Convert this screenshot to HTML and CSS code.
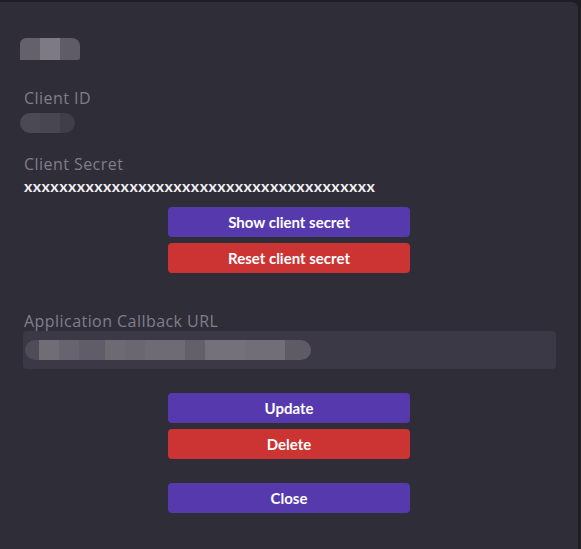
FILE: index.html
```html
<!DOCTYPE html>
<html>
<head>
<meta charset="utf-8">
<link rel="stylesheet" href="styles.css">
</head>
<body>
<div class="modal">
  <div class="blur blur-name">
    <span class="px p1"></span><span class="px p2"></span><span class="px p3"></span>
  </div>
  <div class="label label-id">Client ID</div>
  <div class="blur blur-id">
    <span class="px q1"></span><span class="px q2"></span><span class="px q3"></span>
  </div>
  <div class="label label-secret">Client Secret</div>
  <div class="secret">xxxxxxxxxxxxxxxxxxxxxxxxxxxxxxxxxxxxxxxx</div>
  <div class="btn-group first">
    <button class="btn purple">Show client secret</button>
    <button class="btn red">Reset client secret</button>
  </div>
  <div class="label label-url">Application Callback URL</div>
  <div class="input">
    <div class="blur blur-url">
      <span class="px r1"></span><span class="px r2"></span><span class="px r3"></span><span class="px r4"></span><span class="px r5"></span><span class="px r6"></span><span class="px r7"></span><span class="px r8"></span><span class="px r9"></span><span class="px r10"></span><span class="px r11"></span>
    </div>
  </div>
  <div class="btn-group second">
    <button class="btn purple">Update</button>
    <button class="btn red">Delete</button>
  </div>
  <div class="btn-group third">
    <button class="btn purple">Close</button>
  </div>
</div>
</body>
</html>
```

FILE: styles.css
```css
* { box-sizing: border-box; }
html, body {
  margin: 0;
  padding: 0;
  background: #1f1e23;
  height: 549px;
  overflow: hidden;
}
body {
  font-family: "Open Sans", "Lato", sans-serif;
  padding-top: 2px;
  padding-right: 3px;
}
.modal {
  background: #2f2d38;
  height: 547px;
  border-top-right-radius: 6px;
  padding: 36px 22px 0 23px;
  display: flex;
  flex-direction: column;
}
.blur {
  display: flex;
  overflow: hidden;
}
.px { display: block; height: 100%; }
.blur-name {
  margin-left: -3px;
  height: 22px;
  width: 60px;
  border-radius: 6px 8px 2px 0;
}
.p1 { width: 20px; background: #64616a; }
.p2 { width: 20px; background: #7d7a83; }
.p3 { width: 20px; background: #5f5c67; }
.label {
  color: #817e8b;
  font-size: 16px;
  line-height: 20px;
  height: 20px;
  margin-left: 1px;
  letter-spacing: 0.45px;
}
.label-id { margin-top: 28px; }
.blur-id {
  margin-left: -3px;
  margin-top: 5px;
  height: 20px;
  width: 55px;
  border-radius: 10px;
}
.q1 { width: 20px; background: #4b4953; }
.q2 { width: 20px; background: #48464f; }
.q3 { width: 15px; background: #403e48; }
.label-secret { margin-top: 21px; }
.secret {
  color: #f2f1f5;
  font-family: "Lato", sans-serif;
  font-size: 16px;
  font-weight: 700;
  line-height: 18px;
  height: 18px;
  margin-top: 3px;
  margin-left: 1px;
  letter-spacing: 0.43px;
  white-space: nowrap;
}
.btn-group {
  display: flex;
  flex-direction: column;
  align-items: center;
  gap: 6px;
}
.btn-group.first { margin-top: 12px; }
.btn-group.second { margin-top: 24px; }
.btn-group.third { margin-top: 24px; }
.btn {
  width: 242px;
  height: 30px;
  border: none;
  border-radius: 4px;
  color: #ffffff;
  font-family: "Lato", sans-serif;
  font-weight: 700;
  font-size: 15px;
  padding: 0;
  margin-left: -1px;
}
.purple { background: #5539ad; }
.red { background: #cc3333; }
.label-url { margin-top: 38px; }
.input {
  height: 38px;
  background: #3c3947;
  border-radius: 4px;
  padding: 9px 0 0 2px;
}
.blur-url {
  height: 20px;
  width: 286px;
  border-radius: 10px;
}
.r1 { width: 14px; background: #4e4c56; }
.r2 { width: 20px; background: #706d77; }
.r3 { width: 20px; background: #67646e; }
.r4 { width: 26px; background: #605d68; }
.r5 { width: 20px; background: #6d6a74; }
.r6 { width: 20px; background: #6a6771; }
.r7 { width: 40px; background: #6e6b75; }
.r8 { width: 20px; background: #63606a; }
.r9 { width: 40px; background: #74717b; }
.r10 { width: 40px; background: #716e78; }
.r11 { width: 26px; background: #5e5b65; }
```
